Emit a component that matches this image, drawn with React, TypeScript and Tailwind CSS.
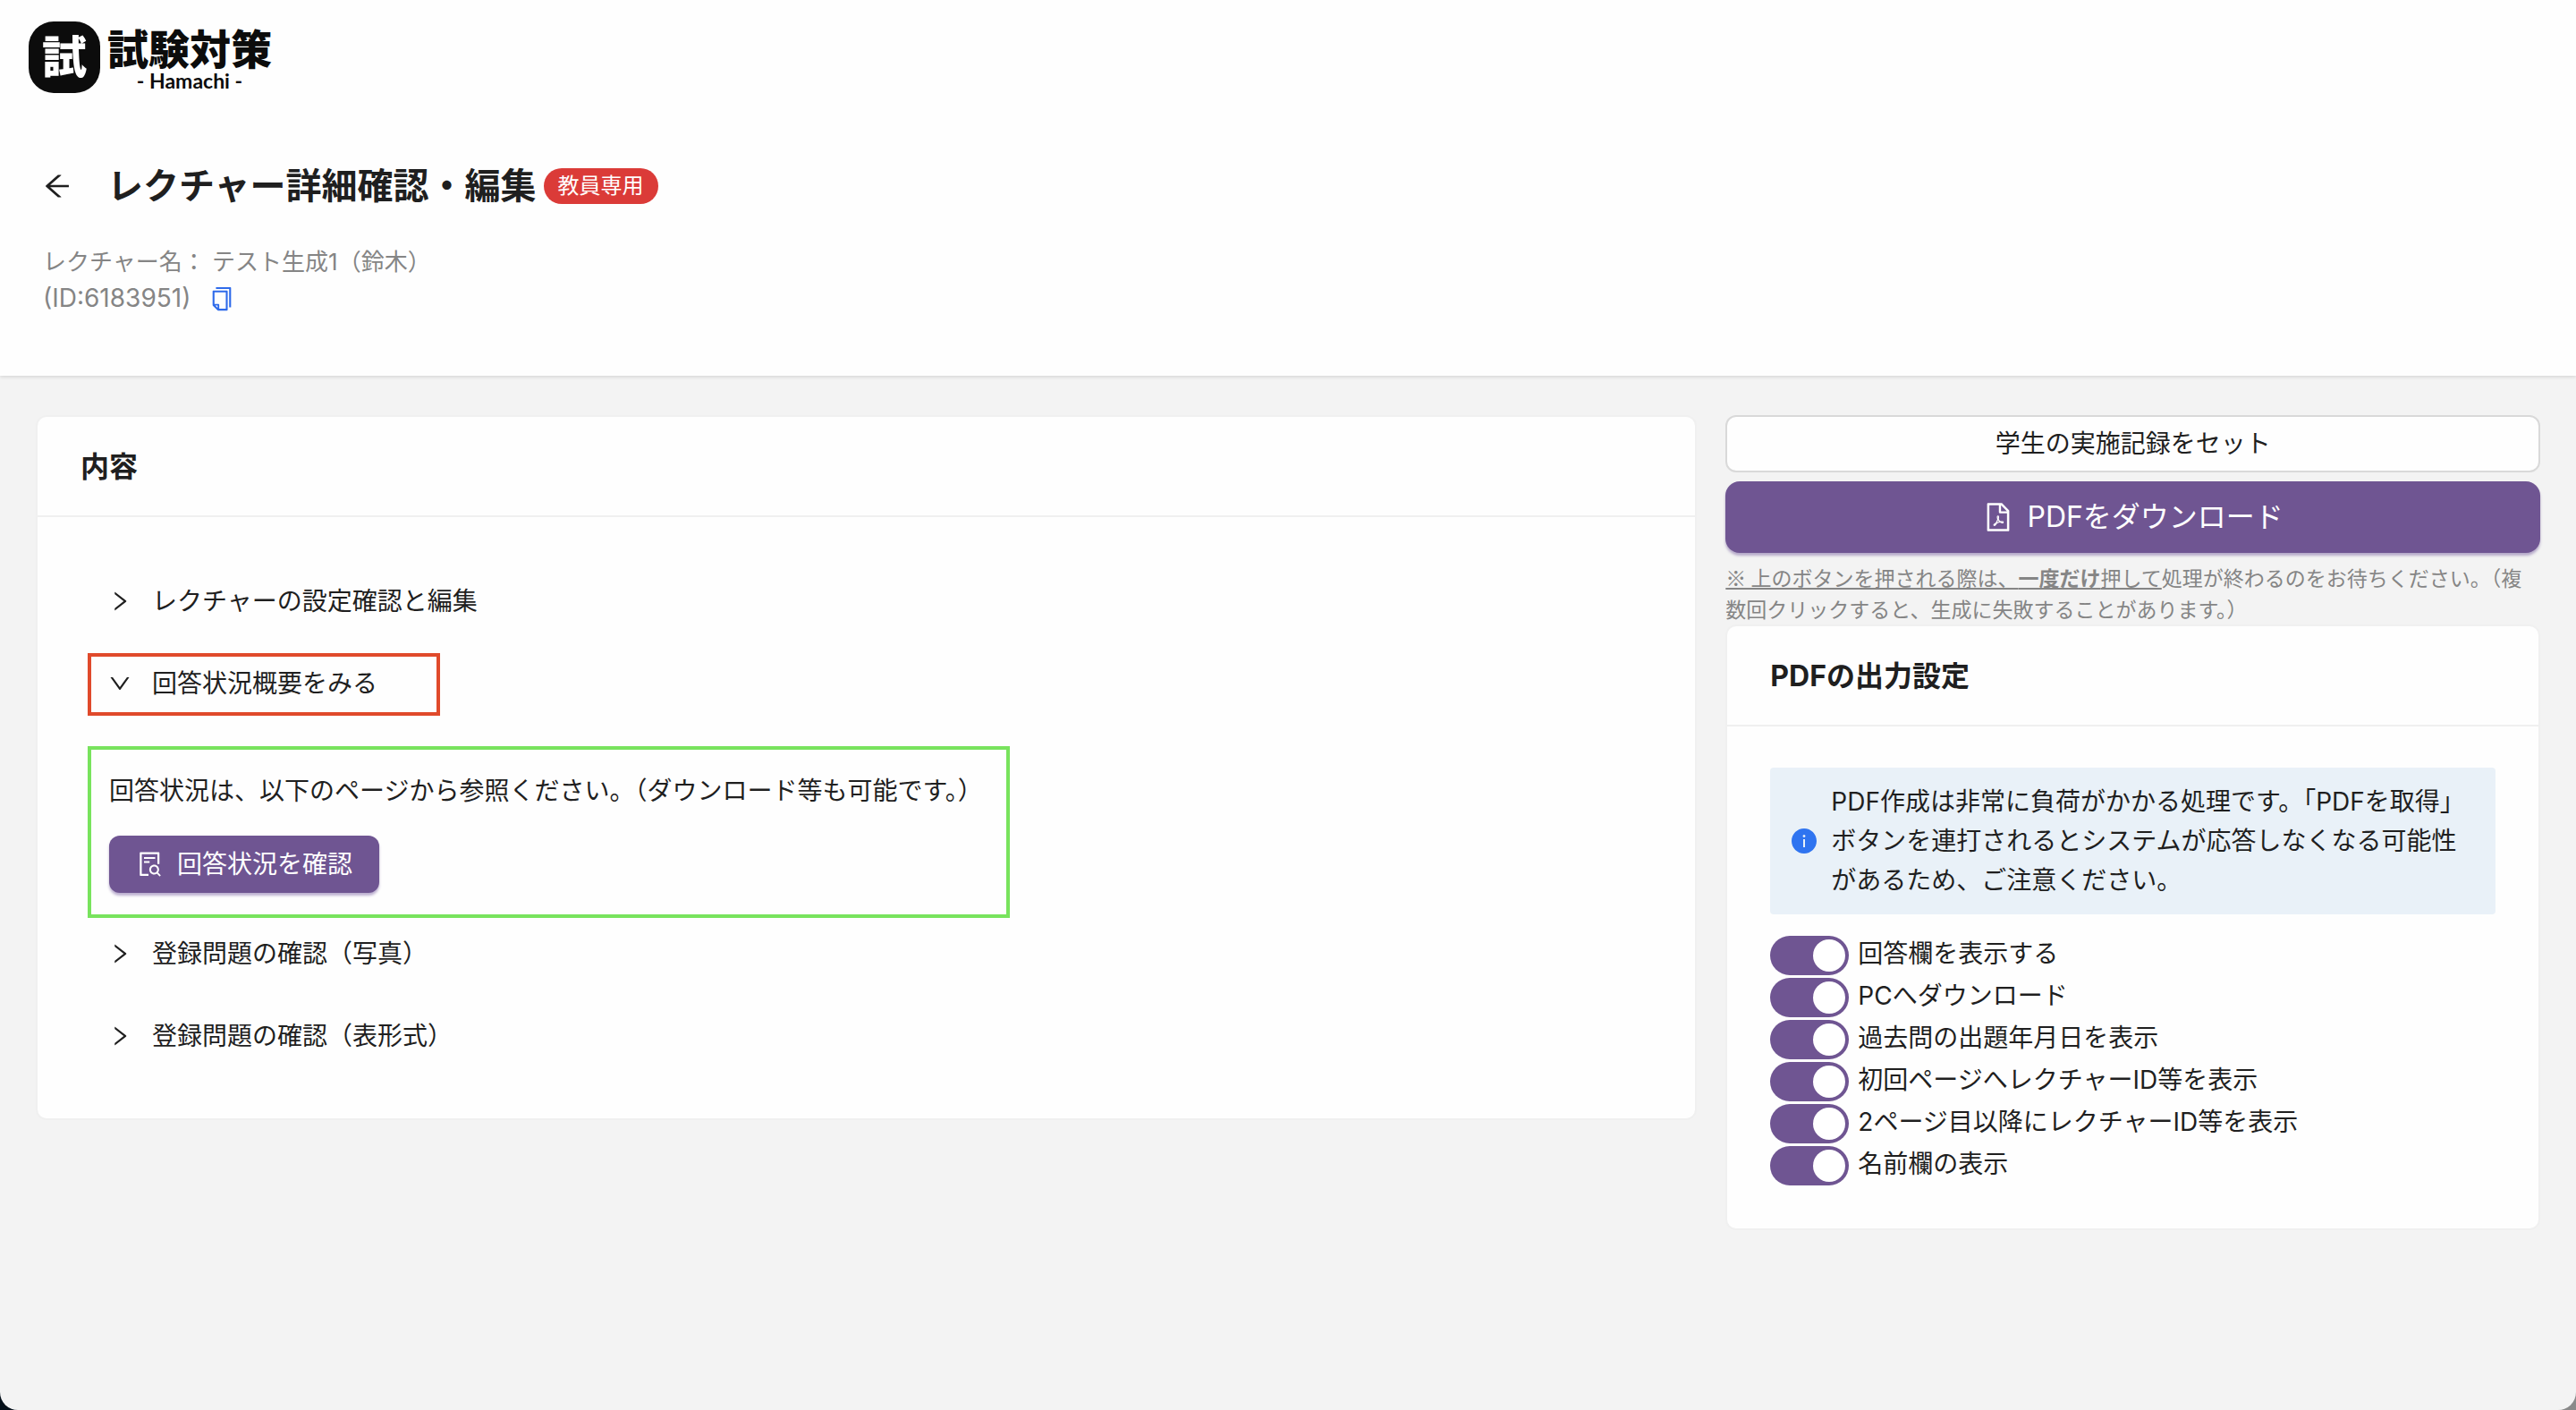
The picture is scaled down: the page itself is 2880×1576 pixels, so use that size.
import {
  AiFillInfoCircle,
  AiOutlineArrowLeft,
  AiOutlineCopy,
  AiOutlineDown,
  AiOutlineFilePdf,
  AiOutlineFileSearch,
  AiOutlineRight,
} from "react-icons/ai";
import { useState } from "react";

const switches = [
  { id: "answer", title: "回答欄を表示する" },
  { id: "pc", title: "PCへダウンロード" },
  { id: "date", title: "過去問の出題年月日を表示" },
  { id: "first", title: "初回ページへレクチャーID等を表示" },
  { id: "second", title: "2ページ目以降にレクチャーID等を表示" },
  { id: "name", title: "名前欄の表示" },
];

const Logo = () => {
  return (
    <a href="#" className="flex gap-2 w-fit">
      <span className="w-20 h-20 rounded-[28px] bg-[#0c0c0c] text-white text-[50px] leading-[80px] font-black text-center">
        試
      </span>
      <span className="flex flex-col items-center text-[#0c0c0c] pt-[6px]">
        <span className="text-[46px] leading-[50px] font-black">試験対策</span>
        <span className="text-[23px] leading-5 font-bold font-['Lato']">
          - Hamachi -
        </span>
      </span>
    </a>
  );
};

type PanelProps = {
  title: string;
  open?: boolean;
};

const PanelHeader = ({ title, open = false }: PanelProps) => {
  return (
    <button
      type="button"
      aria-expanded={open}
      className="flex items-center gap-[22px] h-11 cursor-pointer"
    >
      {open ? (
        <AiOutlineDown className="w-7 h-7" />
      ) : (
        <AiOutlineRight className="w-7 h-7" />
      )}
      <span>{title}</span>
    </button>
  );
};

const Switch = ({ id, title }: { id: string; title: string }) => {
  const [checked, setChecked] = useState(true);

  return (
    <div className="flex gap-[10px]">
      <input
        id={id}
        type="checkbox"
        role="switch"
        checked={checked}
        onChange={() => setChecked(!checked)}
        className="appearance-none w-[88px] h-11 rounded-full bg-gray-400 checked:bg-[#6f5592] cursor-pointer before:block before:w-9 before:h-9 before:m-1 before:rounded-full before:bg-white checked:before:ml-12"
      />
      <label htmlFor={id} className="leading-10">
        {title}
      </label>
    </div>
  );
};

const App = () => {
  return (
    <div className="bg-linear-to-r from-[#05101a] to-[#8a8a8a]">
      <div className="min-h-screen rounded-b-[20px] bg-[#f3f3f3] text-[#1f1f1f] text-[28px] font-['Inter','Noto_Sans_CJK_JP',sans-serif]">
        <header className="h-[420px] bg-[#fefefe] shadow-[0_1px_4px_rgba(0,0,0,0.15)] pt-6">
          <div className="pl-8">
            <Logo />
          </div>
          <div className="pl-[46px] pt-[72px] flex items-center">
            <button type="button" aria-label="戻る" className="cursor-pointer">
              <AiOutlineArrowLeft className="w-9 h-9" />
            </button>
            <h1 className="ml-[38px] text-[40px] leading-[64px] font-bold">
              レクチャー詳細確認・編集
            </h1>
            <span className="ml-2 h-10 px-4 rounded-full bg-[#db3b38] text-white text-[24px] leading-10">
              教員専用
            </span>
          </div>
          <div className="pl-12 pt-8 leading-[41px] text-[#858585]">
            <p className="text-[26px]">レクチャー名： テスト生成1（鈴木）</p>
            <p className="flex items-center gap-5">
              (ID:6183951)
              <button
                type="button"
                aria-label="コピー"
                className="text-[#2f6bea] cursor-pointer"
              >
                <AiOutlineCopy className="w-[30px] h-[30px]" />
              </button>
            </p>
          </div>
        </header>

        <main className="flex items-start gap-8 pt-11 px-10 pb-11">
          <section className="flex-[1856] min-w-0 bg-[#fefefe] border-2 border-[#f0f0f0] rounded-xl pb-[70px]">
            <h2 className="px-12 h-28 leading-[112px] text-[32px] font-bold border-b-2 border-[#f0f0f0]">
              内容
            </h2>
            <div className="px-14 pt-[72px] flex flex-col items-start gap-12">
              <div className="pl-[22px]">
                <PanelHeader title="レクチャーの設定確認と編集" />
              </div>
              <div className="flex flex-col items-start">
                <div className="-mt-3 border-4 border-[#e04a2b] w-[394px] h-[70px] pl-[18px] pt-2">
                  <PanelHeader title="回答状況概要をみる" open />
                </div>
                <div className="mt-[34px] -mb-[30px] border-4 border-[#78e35d] pl-5 pr-[26px] py-6">
                  <p className="leading-[44px]">
                    回答状況は、以下のページから参照ください。（ダウンロード等も可能です。）
                  </p>
                  <button
                    type="button"
                    className="mt-7 h-16 px-[30px] flex items-center gap-[14px] rounded-xl bg-[#6f5592] text-white shadow-[0_3px_3px_rgba(90,60,140,0.4)] cursor-pointer"
                  >
                    <AiOutlineFileSearch className="w-8 h-8" />
                    回答状況を確認
                  </button>
                </div>
              </div>
              <div className="pl-[22px]">
                <PanelHeader title="登録問題の確認（写真）" />
              </div>
              <div className="pl-[22px]">
                <PanelHeader title="登録問題の確認（表形式）" />
              </div>
            </div>
          </section>

          <aside className="flex-[912] min-w-0">
            <button
              type="button"
              className="w-full h-16 rounded-xl border-2 border-[#d9d9d9] bg-[#fefefe] cursor-pointer"
            >
              学生の実施記録をセット
            </button>
            <button
              type="button"
              className="mt-[10px] w-full h-20 flex items-center justify-center gap-[14px] rounded-2xl bg-[#6f5592] text-white text-[32px] shadow-[0_3px_3px_rgba(90,60,140,0.4)] cursor-pointer"
            >
              <AiOutlineFilePdf className="w-9 h-9" />
              PDFをダウンロード
            </button>
            <p className="pt-[10px] text-[23px] leading-[35px] text-[#858585] font-['Noto_Sans_CJK_JP',sans-serif]">
              <span className="underline">
                ※ 上のボタンを押される際は、<strong>一度だけ</strong>押して
              </span>
              処理が終わるのをお待ちください。（複数回クリックすると、生成に失敗することがあります。）
            </p>
            <section className="bg-[#fefefe] border-2 border-[#f0f0f0] rounded-xl pb-12">
              <h2 className="px-12 h-28 leading-[112px] text-[32px] font-bold border-b-2 border-[#f0f0f0]">
                PDFの出力設定
              </h2>
              <div className="px-12 pt-[46px]">
                <div className="flex items-center gap-[14px] bg-[#e9f1f8] px-[22px] py-4 rounded">
                  <AiFillInfoCircle className="w-8 h-8 shrink-0 text-[#2f74f0]" />
                  <p className="leading-[44px]">
                    PDF作成は非常に負荷がかかる処理です。「PDFを取得」ボタンを連打されるとシステムが応答しなくなる可能性があるため、ご注意ください。
                  </p>
                </div>
                <div className="pt-6 flex flex-col gap-[3px]">
                  {switches.map((item) => {
                    return (
                      <Switch key={item.id} id={item.id} title={item.title} />
                    );
                  })}
                </div>
              </div>
            </section>
          </aside>
        </main>
      </div>
    </div>
  );
};

export default App;
